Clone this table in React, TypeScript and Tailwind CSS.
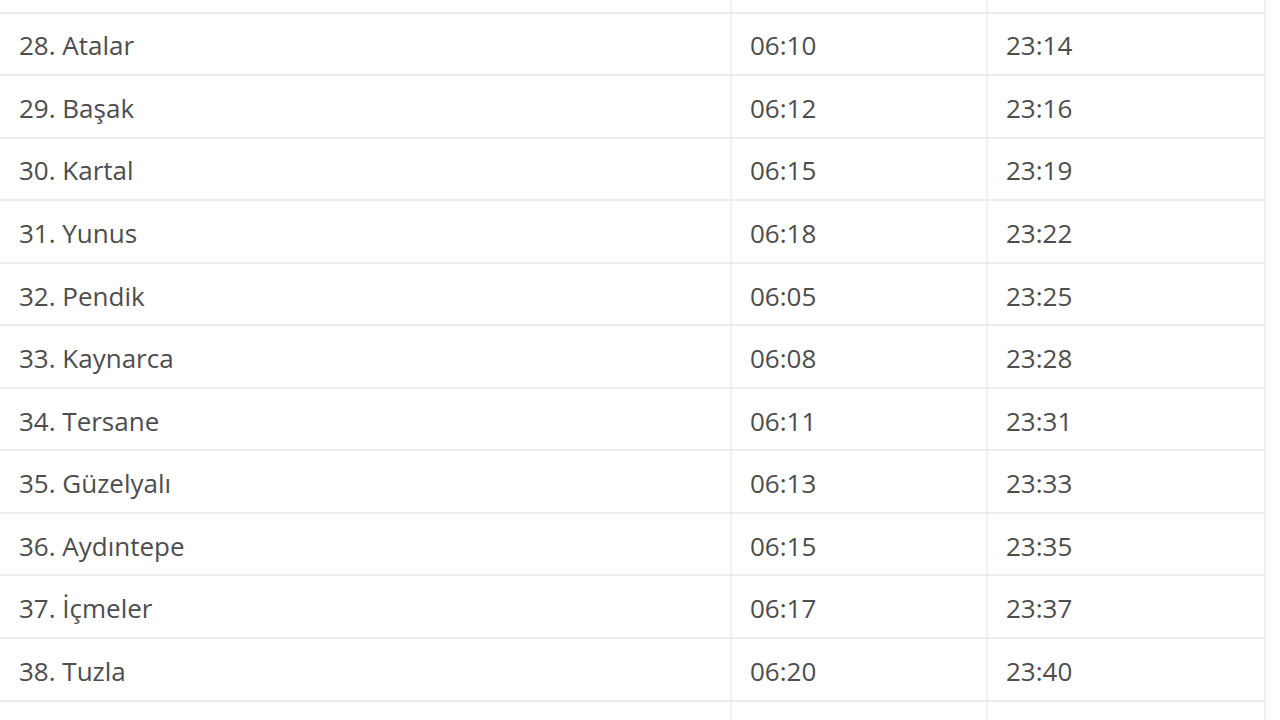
const rows = [
    { name: '27. Cevizli', dep: '06:07', arr: '23:12' },
    { name: '28. Atalar', dep: '06:10', arr: '23:14' },
    { name: '29. Başak', dep: '06:12', arr: '23:16' },
    { name: '30. Kartal', dep: '06:15', arr: '23:19' },
    { name: '31. Yunus', dep: '06:18', arr: '23:22' },
    { name: '32. Pendik', dep: '06:05', arr: '23:25' },
    { name: '33. Kaynarca', dep: '06:08', arr: '23:28' },
    { name: '34. Tersane', dep: '06:11', arr: '23:31' },
    { name: '35. Güzelyalı', dep: '06:13', arr: '23:33' },
    { name: '36. Aydıntepe', dep: '06:15', arr: '23:35' },
    { name: '37. İçmeler', dep: '06:17', arr: '23:37' },
    { name: '38. Tuzla', dep: '06:20', arr: '23:40' },
    { name: '39. Çayırova', dep: '06:22', arr: '23:42' },
];

export default function App() {
    return (
        <div className="w-[1280px] h-[720px] overflow-hidden bg-white">
            <div className="-mt-[49px] w-[1266px] border-r-2 border-[#efefef] font-['Open_Sans',sans-serif] text-[26px] text-[#4d4d4d]">
                {rows.map((r) => (
                    <div key={r.name} className="flex h-[62.55px] border-b-2 border-[#ececec] leading-none">
                        {/* station */}
                        <div className="flex w-[732px] items-center pl-[19px] pt-[3px] border-r-2 border-[#f0f0f0]">
                            {r.name}
                        </div>
                        {/* first train */}
                        <div className="flex w-[256px] items-center pl-[18px] pt-[3px] border-r-2 border-[#f0f0f0]">
                            {r.dep}
                        </div>
                        {/* last train */}
                        <div className="flex flex-1 items-center pl-[18px] pt-[3px]">{r.arr}</div>
                    </div>
                ))}
            </div>
        </div>
    );
}
